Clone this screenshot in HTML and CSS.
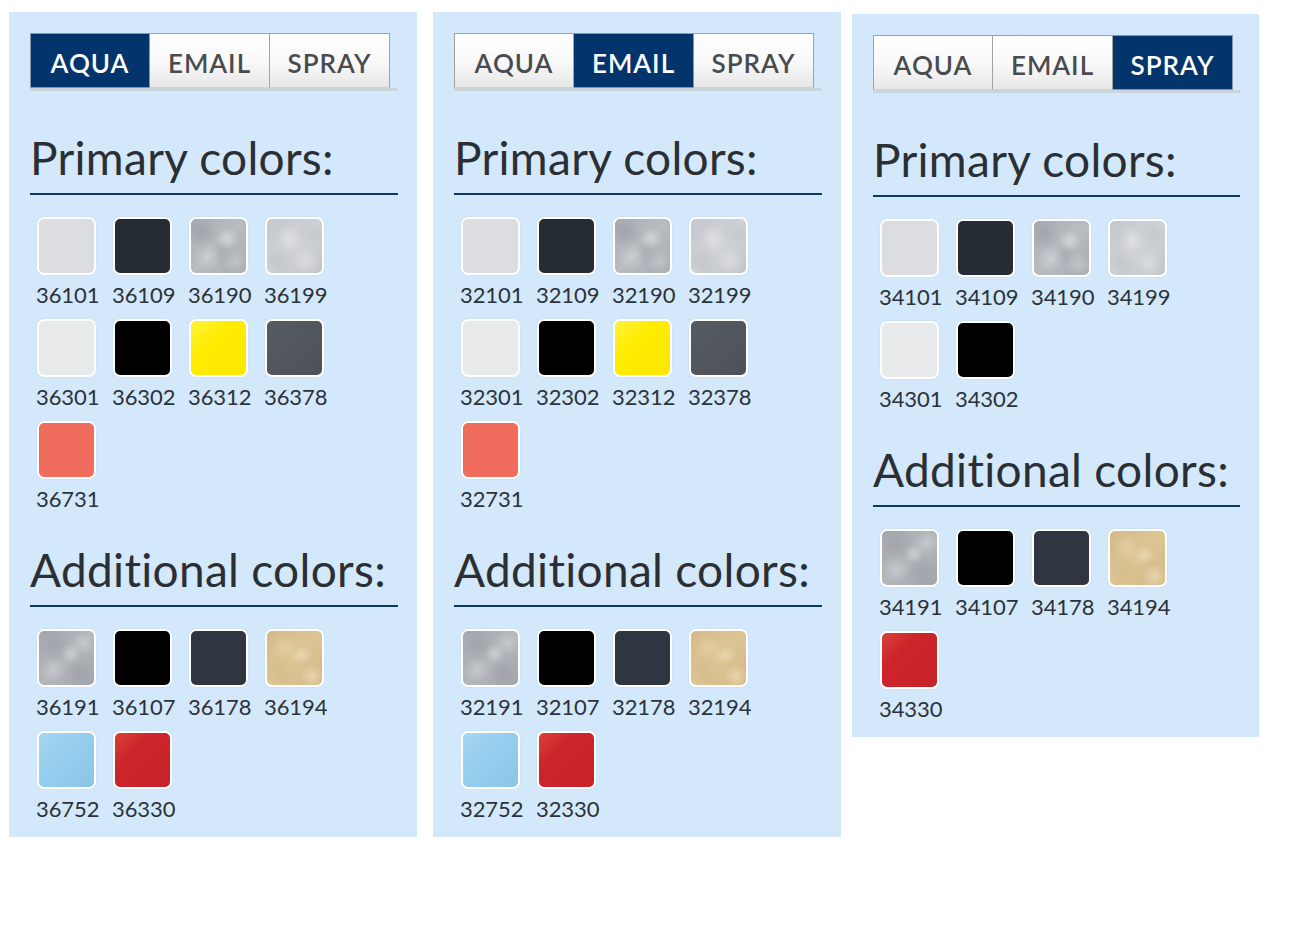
FILE: index.html
```html
<!DOCTYPE html>
<html lang="en">
<head>
<meta charset="utf-8">
<title>Colors</title>
<link rel="stylesheet" href="styles.css">
</head>
<body>
<div class="page">

  <section class="panel">
    <nav class="tabs">
      <span class="tab tab-active">AQUA</span>
      <span class="tab">EMAIL</span>
      <span class="tab">SPRAY</span>
    </nav>
    <h2 class="heading heading-first">Primary colors:</h2>
    <div class="swatches">
      <div class="item"><div class="swatch c-101"></div><div class="code">36101</div></div>
      <div class="item"><div class="swatch c-109"></div><div class="code">36109</div></div>
      <div class="item"><div class="swatch c-190"></div><div class="code">36190</div></div>
      <div class="item"><div class="swatch c-199"></div><div class="code">36199</div></div>
      <div class="item"><div class="swatch c-301"></div><div class="code">36301</div></div>
      <div class="item"><div class="swatch c-302"></div><div class="code">36302</div></div>
      <div class="item"><div class="swatch c-312"></div><div class="code">36312</div></div>
      <div class="item"><div class="swatch c-378"></div><div class="code">36378</div></div>
      <div class="item"><div class="swatch c-731"></div><div class="code">36731</div></div>
    </div>
    <h2 class="heading heading-next">Additional colors:</h2>
    <div class="swatches">
      <div class="item"><div class="swatch c-191"></div><div class="code">36191</div></div>
      <div class="item"><div class="swatch c-107"></div><div class="code">36107</div></div>
      <div class="item"><div class="swatch c-178"></div><div class="code">36178</div></div>
      <div class="item"><div class="swatch c-194"></div><div class="code">36194</div></div>
      <div class="item"><div class="swatch c-752"></div><div class="code">36752</div></div>
      <div class="item"><div class="swatch c-330"></div><div class="code">36330</div></div>
    </div>
  </section>

  <section class="panel">
    <nav class="tabs">
      <span class="tab">AQUA</span>
      <span class="tab tab-active">EMAIL</span>
      <span class="tab">SPRAY</span>
    </nav>
    <h2 class="heading heading-first">Primary colors:</h2>
    <div class="swatches">
      <div class="item"><div class="swatch c-101"></div><div class="code">32101</div></div>
      <div class="item"><div class="swatch c-109"></div><div class="code">32109</div></div>
      <div class="item"><div class="swatch c-190"></div><div class="code">32190</div></div>
      <div class="item"><div class="swatch c-199"></div><div class="code">32199</div></div>
      <div class="item"><div class="swatch c-301"></div><div class="code">32301</div></div>
      <div class="item"><div class="swatch c-302"></div><div class="code">32302</div></div>
      <div class="item"><div class="swatch c-312"></div><div class="code">32312</div></div>
      <div class="item"><div class="swatch c-378"></div><div class="code">32378</div></div>
      <div class="item"><div class="swatch c-731"></div><div class="code">32731</div></div>
    </div>
    <h2 class="heading heading-next">Additional colors:</h2>
    <div class="swatches">
      <div class="item"><div class="swatch c-191"></div><div class="code">32191</div></div>
      <div class="item"><div class="swatch c-107"></div><div class="code">32107</div></div>
      <div class="item"><div class="swatch c-178"></div><div class="code">32178</div></div>
      <div class="item"><div class="swatch c-194"></div><div class="code">32194</div></div>
      <div class="item"><div class="swatch c-752"></div><div class="code">32752</div></div>
      <div class="item"><div class="swatch c-330"></div><div class="code">32330</div></div>
    </div>
  </section>

  <section class="panel panel-spray">
    <nav class="tabs">
      <span class="tab">AQUA</span>
      <span class="tab">EMAIL</span>
      <span class="tab tab-active">SPRAY</span>
    </nav>
    <h2 class="heading heading-first">Primary colors:</h2>
    <div class="swatches">
      <div class="item"><div class="swatch c-101"></div><div class="code">34101</div></div>
      <div class="item"><div class="swatch c-109"></div><div class="code">34109</div></div>
      <div class="item"><div class="swatch c-190"></div><div class="code">34190</div></div>
      <div class="item"><div class="swatch c-199"></div><div class="code">34199</div></div>
      <div class="item"><div class="swatch c-301"></div><div class="code">34301</div></div>
      <div class="item"><div class="swatch c-302"></div><div class="code">34302</div></div>
    </div>
    <h2 class="heading heading-next">Additional colors:</h2>
    <div class="swatches">
      <div class="item"><div class="swatch c-191"></div><div class="code">34191</div></div>
      <div class="item"><div class="swatch c-107"></div><div class="code">34107</div></div>
      <div class="item"><div class="swatch c-178"></div><div class="code">34178</div></div>
      <div class="item"><div class="swatch c-194"></div><div class="code">34194</div></div>
      <div class="item"><div class="swatch c-330"></div><div class="code">34330</div></div>
    </div>
  </section>

</div>
</body>
</html>
```
FILE: styles.css
```css
html, body {
  margin: 0;
  padding: 0;
  background: #ffffff;
}

body {
  font-family: Lato, "Roboto", "Liberation Sans", sans-serif;
  color: #2c3138;
}

.page {
  display: flex;
  align-items: flex-start;
  padding: 12px 0 0 9px;
}

.panel {
  width: 408px;
  box-sizing: border-box;
  padding: 21px 19px 14px 21px;
  background: #d3e8fb;
}

.panel + .panel {
  margin-left: 16px;
}

.panel.panel-spray {
  margin-left: 11px;
  margin-top: 2px;
  width: 407px;
}

/* Tabs */
.tabs {
  display: flex;
  box-shadow: 0 3px 0 0 #cbd3db;
}

.tab {
  box-sizing: border-box;
  width: 120px;
  height: 55px;
  display: flex;
  align-items: center;
  justify-content: center;
  padding-top: 4px;
  font-size: 26px;
  font-weight: 600;
  letter-spacing: 1px;
  color: #484b50;
  background: linear-gradient(#ffffff 0%, #f8f8f8 55%, #e7e7e7 100%);
  border: 1px solid #a2a2a2;
  border-bottom-color: #d2d2d2;
}

.tab + .tab {
  border-left: none;
}

.tab-active {
  background: #04346c;
  color: #ffffff;
  border-color: #8996a6;
}

/* Headings */
.heading {
  margin: 0;
  font-size: 46px;
  font-weight: 400;
  line-height: 56px;
  white-space: nowrap;
  color: #2b2f34;
  padding-bottom: 7px;
  border-bottom: 2px solid #0e3a62;
  letter-spacing: 0.3px;
}

.heading-first {
  margin-top: 42px;
}

.heading-next {
  margin-top: 29px;
}

/* Swatches */
.swatches {
  display: grid;
  grid-template-columns: repeat(4, 64px);
  column-gap: 12px;
  row-gap: 10px;
  margin-top: 22px;
  padding-left: 6px;
}

.item {
  display: flex;
  flex-direction: column;
}

.swatch {
  box-sizing: border-box;
  width: 59px;
  height: 58px;
  margin-left: 1px;
  border: 2px solid #ffffff;
  border-radius: 7px;
  box-shadow: 0 0 1px rgba(120, 140, 160, 0.35);
}

.code {
  margin-top: 6px;
  font-size: 22px;
  line-height: 28px;
  color: #2c323a;
  letter-spacing: -0.1px;
}

.c-101 { background: #dcdde1; }
.c-109 { background: #262c34; }
.c-190 {
  background:
    radial-gradient(ellipse at 66% 36%, rgba(255,255,255,0.35) 0, rgba(255,255,255,0) 22%),
    radial-gradient(ellipse at 30% 70%, rgba(255,255,255,0.25) 0, rgba(255,255,255,0) 24%),
    radial-gradient(ellipse at 82% 80%, rgba(255,255,255,0.22) 0, rgba(255,255,255,0) 20%),
    radial-gradient(ellipse at 20% 25%, rgba(120,125,132,0.25) 0, rgba(120,125,132,0) 28%),
    radial-gradient(ellipse at 55% 62%, rgba(130,135,142,0.22) 0, rgba(130,135,142,0) 26%),
    linear-gradient(135deg, #a9adb3, #b9bdc2 50%, #a7abb1);
}
.c-199 {
  background:
    radial-gradient(ellipse at 40% 35%, rgba(255,255,255,0.35) 0, rgba(255,255,255,0) 26%),
    radial-gradient(ellipse at 72% 78%, rgba(255,255,255,0.3) 0, rgba(255,255,255,0) 24%),
    radial-gradient(ellipse at 20% 80%, rgba(160,165,172,0.25) 0, rgba(160,165,172,0) 26%),
    radial-gradient(ellipse at 78% 25%, rgba(165,170,176,0.22) 0, rgba(165,170,176,0) 26%),
    linear-gradient(135deg, #c3c7cc, #d0d3d7 50%, #c1c5ca);
}
.c-301 { background: #e9eaec; }
.c-302 { background: #000000; }
.c-312 { background: linear-gradient(135deg, #fff23a, #ffec00 40%, #fbe700); }
.c-378 { background: linear-gradient(135deg, #565b62, #4d5259); }
.c-731 { background: #f06d5e; }
.c-191 {
  background:
    radial-gradient(ellipse at 58% 42%, rgba(255,255,255,0.3) 0, rgba(255,255,255,0) 22%),
    radial-gradient(ellipse at 25% 72%, rgba(255,255,255,0.22) 0, rgba(255,255,255,0) 24%),
    radial-gradient(ellipse at 82% 22%, rgba(255,255,255,0.25) 0, rgba(255,255,255,0) 20%),
    radial-gradient(ellipse at 30% 25%, rgba(125,130,137,0.22) 0, rgba(125,130,137,0) 28%),
    radial-gradient(ellipse at 70% 75%, rgba(125,130,137,0.22) 0, rgba(125,130,137,0) 26%),
    linear-gradient(135deg, #a4a8ae, #b3b7bc 50%, #a2a6ac);
}
.c-107 { background: #000000; }
.c-178 { background: #303641; }
.c-194 {
  background:
    radial-gradient(ellipse at 62% 45%, rgba(255,250,230,0.35) 0, rgba(255,250,230,0) 22%),
    radial-gradient(ellipse at 82% 85%, rgba(255,250,230,0.4) 0, rgba(255,250,230,0) 20%),
    radial-gradient(ellipse at 30% 30%, rgba(255,250,230,0.22) 0, rgba(255,250,230,0) 24%),
    radial-gradient(ellipse at 25% 75%, rgba(190,160,110,0.22) 0, rgba(190,160,110,0) 26%),
    linear-gradient(135deg, #d5ba88, #ddc595 50%, #d3b784);
}
.c-752 { background: linear-gradient(135deg, #a3d6f2, #92cbec 60%, #8cc4e6); }
.c-330 { background: linear-gradient(135deg, #d9423a 0%, #cc2429 35%, #c8222a 100%); }
```
